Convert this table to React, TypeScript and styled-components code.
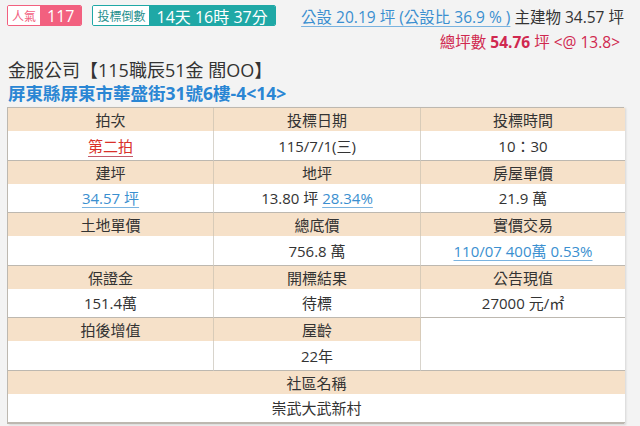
import React from "react";
import styled, { createGlobalStyle } from "styled-components";

const Global = createGlobalStyle`
  html, body { margin: 0; padding: 0; background: #f3f3f3; }
  body { font-family: "Open Sans", "Noto Sans CJK TC", sans-serif; color: #333; }
`;

const Page = styled.div`
  width: 640px;
  height: 426px;
  overflow: hidden;
  padding: 0 16px 0 7px;
  box-sizing: border-box;
`;

const TopBar = styled.div`
  display: flex;
  justify-content: space-between;
  align-items: flex-start;
  height: 58px;
`;

const Badges = styled.div`
  display: flex;
  gap: 10px;
  padding-top: 5px;
`;

const Badge = styled.div<{ $c: string }>`
  display: flex;
  height: 21px;
  border: 1px solid ${(p) => p.$c};
  border-radius: 2px;
  box-sizing: border-box;
  overflow: hidden;
`;

const BadgeLabel = styled.span<{ $c: string }>`
  display: flex;
  align-items: center;
  padding: 0 4px;
  background: #fff;
  color: ${(p) => p.$c};
  font-size: 12px;
`;

const BadgeValue = styled.span<{ $c: string }>`
  display: flex;
  align-items: center;
  padding: 0 7px;
  background: ${(p) => p.$c};
  color: #fff;
  font-size: 16px;
`;

const Summary = styled.div`
  display: flex;
  flex-direction: column;
  align-items: flex-end;
  font-size: 15.5px;
  line-height: 25px;
  padding-top: 5px;
`;

const Link = styled.span`
  color: #3a8fd0;
  text-decoration: underline;
  text-decoration-color: #7ab3df;
  text-underline-offset: 3px;
`;

const Total = styled.span`
  color: #d0284f;
  padding-right: 4px;
  b { font-weight: 700; }
`;

const Title = styled.div`
  font-size: 18px;
  line-height: 24px;
  color: #333;
  padding-left: 1px;
`;

const Address = styled.div`
  font-size: 17.5px;
  font-weight: 700;
  color: #2a86d4;
  line-height: 22px;
  padding-left: 1px;
  margin-bottom: 3px;
`;

const Grid = styled.div`
  display: grid;
  grid-template-columns: 206px 207px 204px;
  width: 617px;
  border: 1px solid #bdb8b0;
  box-sizing: border-box;
  background: #fff;
  box-shadow: 2px 1px 2px rgba(0, 0, 0, 0.12);
  font-size: 15px;
`;

const Head = styled.div<{ $last?: boolean; $span?: number }>`
  grid-column: span ${(p) => p.$span ?? 1};
  height: 23px;
  background: #f6e1c9;
  display: flex;
  align-items: center;
  justify-content: center;
  border-right: ${(p) => (p.$last ? "none" : "1px solid #d8cbb8")};
  color: #333;
`;

const Value = styled.div<{ $last?: boolean; $span?: number; $rows?: number }>`
  grid-column: span ${(p) => p.$span ?? 1};
  grid-row: span ${(p) => p.$rows ?? 1};
  min-height: 28.5px;
  background: #fff;
  display: flex;
  align-items: center;
  justify-content: center;
  border-right: ${(p) => (p.$last ? "none" : "1px solid #d8d4cc")};
  border-bottom: 1px solid #bdb8b0;
  color: #333;
`;

const Red = styled.span`
  color: #d9302a;
  text-decoration: underline;
  text-decoration-color: #c45a6a;
  text-underline-offset: 4px;
`;

export default function App() {
  return (
    <Page>
      <Global />
      <TopBar>
        <Badges>
          <Badge $c="#f2607f">
            <BadgeLabel $c="#f2607f">人氣</BadgeLabel>
            <BadgeValue $c="#f2607f">117</BadgeValue>
          </Badge>
          <Badge $c="#1fa8a6">
            <BadgeLabel $c="#1f8f8d">投標倒數</BadgeLabel>
            <BadgeValue $c="#1fa8a6">14天 16時 37分</BadgeValue>
          </Badge>
        </Badges>
        <Summary>
          <span>
            <Link>公設 20.19 坪 (公設比 36.9 % )</Link> 主建物 34.57 坪
          </span>
          <Total>
            總坪數 <b>54.76</b> 坪 &lt;@ 13.8&gt;
          </Total>
        </Summary>
      </TopBar>
      <Title>金服公司【115職辰51金 閻OO】</Title>
      <Address>屏東縣屏東市華盛街31號6樓-4&lt;14&gt;</Address>
      <Grid>
        <Head>拍次</Head>
        <Head>投標日期</Head>
        <Head $last>投標時間</Head>
        <Value><Red>第二拍</Red></Value>
        <Value>115/7/1(三)</Value>
        <Value $last>10：30</Value>

        <Head>建坪</Head>
        <Head>地坪</Head>
        <Head $last>房屋單價</Head>
        <Value><Link>34.57 坪</Link></Value>
        <Value>13.80 坪&nbsp;<Link>28.34%</Link></Value>
        <Value $last>21.9 萬</Value>

        <Head>土地單價</Head>
        <Head>總底價</Head>
        <Head $last>實價交易</Head>
        <Value></Value>
        <Value>756.8 萬</Value>
        <Value $last><Link>110/07 400萬 0.53%</Link></Value>

        <Head>保證金</Head>
        <Head>開標結果</Head>
        <Head $last>公告現值</Head>
        <Value>151.4萬</Value>
        <Value>待標</Value>
        <Value $last>27000 元/㎡</Value>

        <Head>拍後增值</Head>
        <Head>屋齡</Head>
        <Value $last $rows={2}></Value>
        <Value></Value>
        <Value>22年</Value>

        <Head $span={3} $last>社區名稱</Head>
        <Value $span={3} $last>崇武大武新村</Value>
      </Grid>
    </Page>
  );
}
